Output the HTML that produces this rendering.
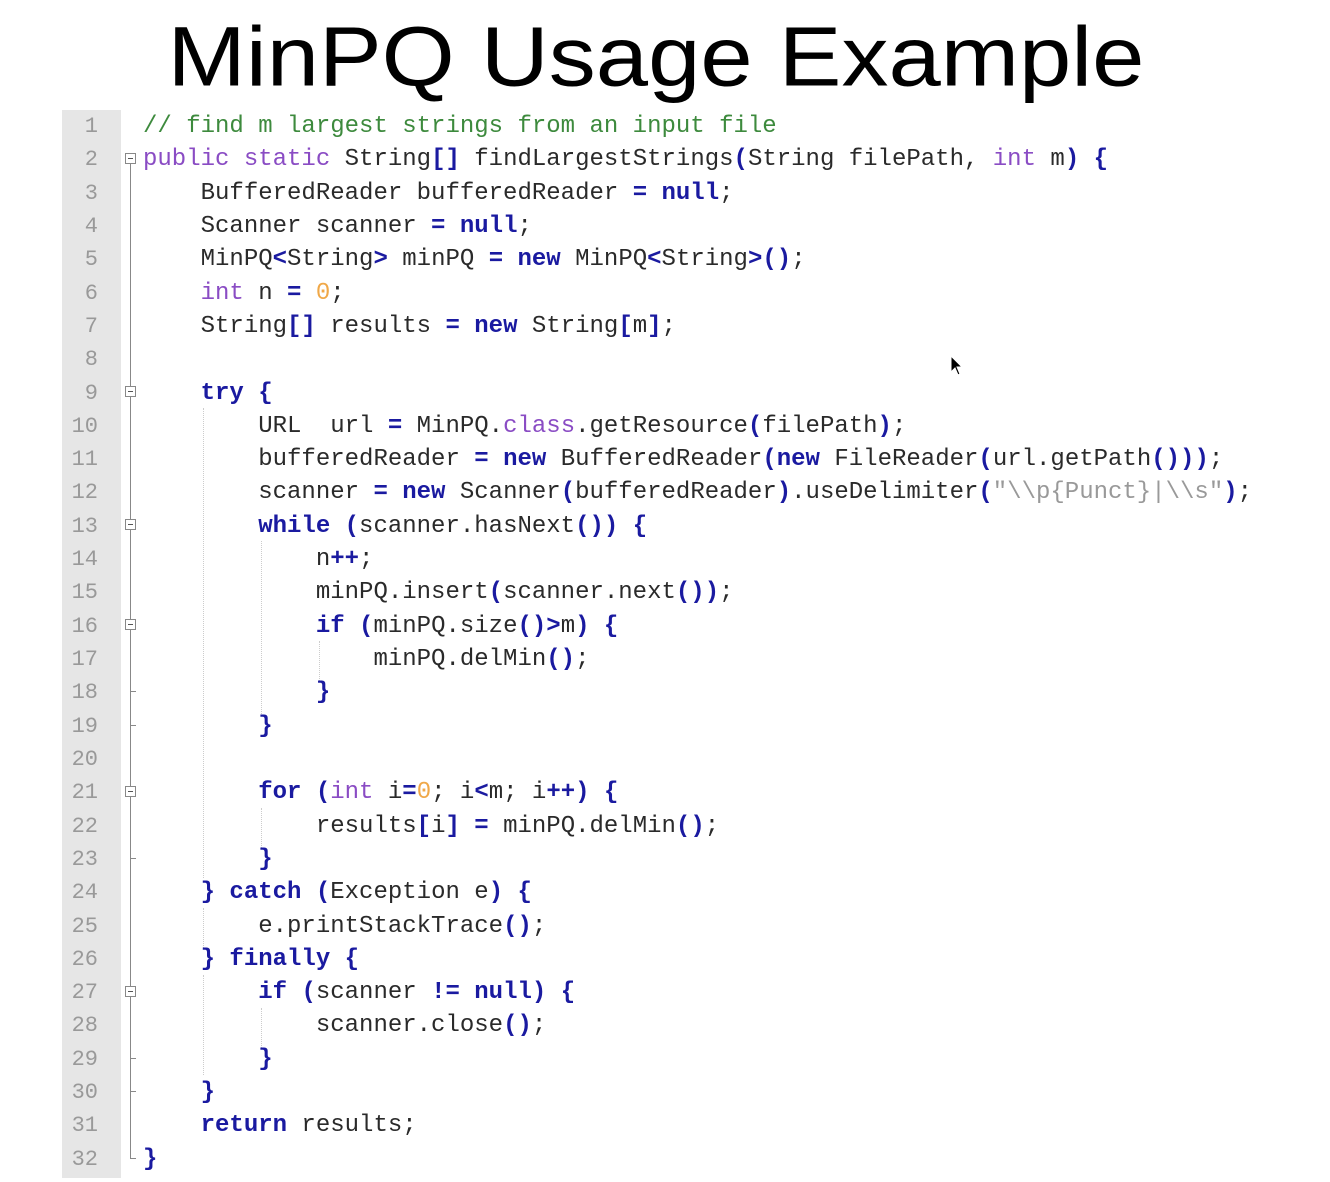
<!DOCTYPE html>
<html><head><meta charset="utf-8"><style>
body{margin:0;width:1330px;height:1182px;background:#fff;position:relative;overflow:hidden}
h1{position:absolute;left:0;width:1312px;top:-2px;margin:0;text-align:center;font:94px/110px "Liberation Sans",sans-serif;color:#000;letter-spacing:0;transform:scaleY(0.9);transform-origin:50% 92px}
.gut{position:absolute;left:62px;top:110px;width:59px;height:1068px;background:#e6e6e6}
.nums{position:absolute;left:62px;width:36px;top:110px;text-align:right;font:22px/33.32px "Liberation Mono",monospace;color:#999}
pre{position:absolute;left:143px;top:110px;margin:0;font:24px/33.32px "Liberation Mono",monospace;color:#2a2a2a}
.c{color:#3d8a3d}.k{color:#8a4cc4}.b{color:#1a1aa0;font-weight:bold}.n{color:#f0a848}.s{color:#999}.o{color:#1a1aa0;font-weight:bold}
.fb{position:absolute;left:125px;width:11px;height:11px;border:1px solid #888;background:#fff;box-sizing:border-box}
.fb:after{content:"";position:absolute;left:2px;top:4px;width:5px;height:1px;background:#555}
.vl{position:absolute;left:130px;width:1px;background:#888}
.tk{position:absolute;left:130px;width:6px;height:1px;background:#888}
.ig{position:absolute;width:0;border-left:1px dotted #ccc}
</style></head><body>
<h1>MinPQ Usage Example</h1>
<div class="gut"></div>
<div class="nums">1<br>2<br>3<br>4<br>5<br>6<br>7<br>8<br>9<br>10<br>11<br>12<br>13<br>14<br>15<br>16<br>17<br>18<br>19<br>20<br>21<br>22<br>23<br>24<br>25<br>26<br>27<br>28<br>29<br>30<br>31<br>32</div>
<div class="vl" style="top:164px;height:994px"></div>
<div class="tk" style="top:1158px"></div>
<div class="fb" style="top:153px"></div>
<div class="fb" style="top:386px"></div>
<div class="fb" style="top:519px"></div>
<div class="fb" style="top:619px"></div>
<div class="fb" style="top:786px"></div>
<div class="fb" style="top:986px"></div>
<div class="tk" style="top:691px"></div><div class="tk" style="top:725px"></div>
<div class="tk" style="top:858px"></div><div class="tk" style="top:1058px"></div><div class="tk" style="top:1091px"></div>
<div class="ig" style="left:203px;top:408px;height:470px"></div>
<div class="ig" style="left:203px;top:908px;height:40px"></div>
<div class="ig" style="left:203px;top:975px;height:100px"></div>
<div class="ig" style="left:261px;top:541px;height:175px"></div>
<div class="ig" style="left:261px;top:808px;height:40px"></div>
<div class="ig" style="left:261px;top:1008px;height:40px"></div>
<div class="ig" style="left:319px;top:641px;height:40px"></div>
<pre><span class="c">// find m largest strings from an input file</span>
<span class="k">public static</span> String<span class="o">[]</span> findLargestStrings<span class="o">(</span>String filePath, <span class="k">int</span> m<span class="o">)</span> <span class="o">{</span>
    BufferedReader bufferedReader <span class="o">=</span> <span class="b">null</span>;
    Scanner scanner <span class="o">=</span> <span class="b">null</span>;
    MinPQ<span class="o">&lt;</span>String<span class="o">&gt;</span> minPQ <span class="o">=</span> <span class="b">new</span> MinPQ<span class="o">&lt;</span>String<span class="o">&gt;()</span>;
    <span class="k">int</span> n <span class="o">=</span> <span class="n">0</span>;
    String<span class="o">[]</span> results <span class="o">=</span> <span class="b">new</span> String<span class="o">[</span>m<span class="o">]</span>;

    <span class="b">try</span> <span class="o">{</span>
        URL  url <span class="o">=</span> MinPQ.<span class="k">class</span>.getResource<span class="o">(</span>filePath<span class="o">)</span>;
        bufferedReader <span class="o">=</span> <span class="b">new</span> BufferedReader<span class="o">(</span><span class="b">new</span> FileReader<span class="o">(</span>url.getPath<span class="o">()))</span>;
        scanner <span class="o">=</span> <span class="b">new</span> Scanner<span class="o">(</span>bufferedReader<span class="o">)</span>.useDelimiter<span class="o">(</span><span class="s">"\\p{Punct}|\\s"</span><span class="o">)</span>;
        <span class="b">while</span> <span class="o">(</span>scanner.hasNext<span class="o">())</span> <span class="o">{</span>
            n<span class="o">++</span>;
            minPQ.insert<span class="o">(</span>scanner.next<span class="o">())</span>;
            <span class="b">if</span> <span class="o">(</span>minPQ.size<span class="o">()&gt;</span>m<span class="o">)</span> <span class="o">{</span>
                minPQ.delMin<span class="o">()</span>;
            <span class="o">}</span>
        <span class="o">}</span>

        <span class="b">for</span> <span class="o">(</span><span class="k">int</span> i<span class="o">=</span><span class="n">0</span>; i<span class="o">&lt;</span>m; i<span class="o">++)</span> <span class="o">{</span>
            results<span class="o">[</span>i<span class="o">]</span> <span class="o">=</span> minPQ.delMin<span class="o">()</span>;
        <span class="o">}</span>
    <span class="o">}</span> <span class="b">catch</span> <span class="o">(</span>Exception e<span class="o">)</span> <span class="o">{</span>
        e.printStackTrace<span class="o">()</span>;
    <span class="o">}</span> <span class="b">finally</span> <span class="o">{</span>
        <span class="b">if</span> <span class="o">(</span>scanner <span class="o">!=</span> <span class="b">null</span><span class="o">)</span> <span class="o">{</span>
            scanner.close<span class="o">()</span>;
        <span class="o">}</span>
    <span class="o">}</span>
    <span class="b">return</span> results;
<span class="o">}</span></pre>
<svg style="position:absolute;left:950px;top:355px" width="14" height="22"><path d="M1 1 L1 17 L5 13 L8 20 L10 19 L7 12 L12 12 Z" fill="#000" stroke="#fff" stroke-width="1"/></svg>
</body></html>
